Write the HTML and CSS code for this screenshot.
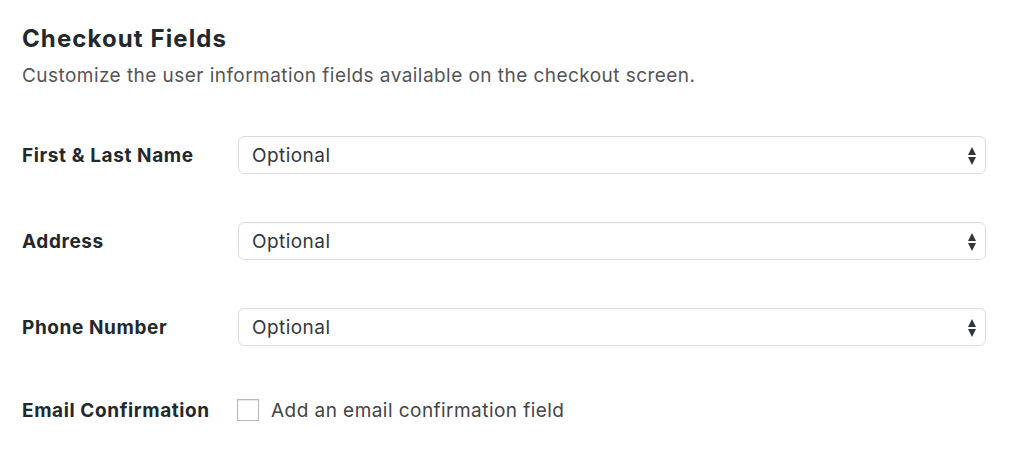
FILE: index.html
```html
<!DOCTYPE html>
<html lang="en">
<head>
  <meta charset="UTF-8">
  <title>Checkout Fields</title>
  <link rel="stylesheet" href="styles.css">
</head>
<body>
  <div class="settings">
    <h2 class="settings__title">Checkout Fields</h2>
    <p class="settings__desc">Customize the user information fields available on the checkout screen.</p>

    <div class="field">
      <label class="field__label">First &amp; Last Name</label>
      <div class="select">
        <span class="select__value">Optional</span>
        <span class="select__arrows"></span>
      </div>
    </div>

    <div class="field">
      <label class="field__label">Address</label>
      <div class="select">
        <span class="select__value">Optional</span>
        <span class="select__arrows"></span>
      </div>
    </div>

    <div class="field">
      <label class="field__label">Phone Number</label>
      <div class="select">
        <span class="select__value">Optional</span>
        <span class="select__arrows"></span>
      </div>
    </div>

    <div class="field field--check">
      <label class="field__label">Email Confirmation</label>
      <label class="check">
        <span class="check__box"></span>
        <span class="check__text">Add an email confirmation field</span>
      </label>
    </div>
  </div>
</body>
</html>
```

FILE: styles.css
```css
body {
  margin: 0;
  background: #fff;
  font-family: Inter, "Noto Sans", sans-serif;
  color: #23282d;
}

.settings {
  padding: 22px 38px 0 22px;
}

.settings__title {
  margin: 0;
  font-size: 24px;
  font-weight: 700;
  line-height: 34px;
  letter-spacing: 1.1px;
}

.settings__desc {
  margin: 6px 0 0;
  font-size: 19px;
  line-height: 28px;
  letter-spacing: 0.45px;
  color: #555;
}

.field {
  display: flex;
  align-items: center;
  height: 40px;
  margin-top: 46px;
}

.field:first-of-type {
  margin-top: 45px;
}

.field__label {
  flex: 0 0 216px;
  font-size: 19px;
  font-weight: 700;
  letter-spacing: 0.6px;
}

/* select box */
.select {
  flex: 1;
  display: flex;
  align-items: center;
  justify-content: space-between;
  height: 38px;
  padding: 0 9px 0 13px;
  border: 1px solid #ddd;
  border-radius: 6px;
  box-shadow: inset 0 1px 2px rgba(0, 0, 0, 0.04);
  box-sizing: border-box;
}

.select__value {
  font-size: 19px;
  letter-spacing: 0.45px;
  color: #32373c;
}

.select__arrows {
  position: relative;
  width: 8px;
  height: 19px;
}

.select__arrows::before,
.select__arrows::after {
  content: '';
  position: absolute;
  left: 0;
  border-left: 4px solid transparent;
  border-right: 4px solid transparent;
}

.select__arrows::before {
  top: 1px;
  border-bottom: 8px solid #32373c;
}

.select__arrows::after {
  bottom: 0;
  border-top: 8px solid #32373c;
}

/* checkbox row */
.field--check {
  margin-top: 43px;
}

.check {
  display: flex;
  align-items: center;
}

.check__box {
  width: 22px;
  height: 22px;
  margin-left: -1px;
  border: 1px solid #b4b9be;
  box-shadow: inset 0 1px 2px rgba(0, 0, 0, 0.1);
  box-sizing: border-box;
  background: #fff;
}

.check__text {
  margin-left: 12px;
  font-size: 19px;
  letter-spacing: 0.45px;
  color: #444;
}
```
